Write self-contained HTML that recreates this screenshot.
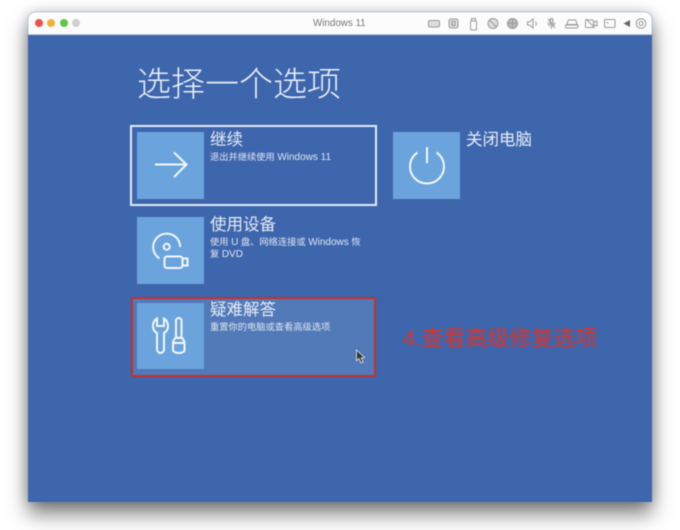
<!DOCTYPE html>
<html><head><meta charset="utf-8"><style>
html,body{margin:0;padding:0;width:680px;height:530px;overflow:hidden;background:#fff}
body{position:relative;font-family:"Liberation Sans","Noto Sans CJK SC",sans-serif}
.a{position:absolute;white-space:nowrap}
.a,svg{filter:blur(.4px)}
#win{left:27.5px;top:12px;width:624.5px;height:490px;background:#3e66ad;border-radius:7px 7px 0 0;box-shadow:0 12px 20px rgba(0,0,0,.5),0 0 14px rgba(0,0,0,.2);}
#bar{left:27.5px;top:12px;width:624.5px;height:23px;background:#fcfcfc;border-radius:7px 7px 0 0;border-bottom:1px solid #c9d1de;box-sizing:border-box}
.dot{width:8px;height:8px;border-radius:50%;top:19px}
.t{width:67px;height:67px;background:#6ba4dc}
.h{color:#e6edf6;font-size:16.5px;line-height:20px}
.s{color:#dfe7f3;font-size:9.25px;line-height:12px}
.s b{font-weight:400;font-size:10px}
svg{position:absolute;overflow:visible}
</style></head><body>
<div class="a" id="win"></div>
<div class="a" id="bar"></div>
<div class="a dot" style="left:35px;background:#e8534d"></div>
<div class="a dot" style="left:47px;background:#efb035"></div>
<div class="a dot" style="left:59.500px;background:#5fc545"></div>
<div class="a dot" style="left:71.500px;background:#cfcfcf"></div>
<div class="a" style="left:313px;top:17px;font-size:9.800px;line-height:13px;color:#777">Windows 11</div>

<svg style="left:0;top:0" width="680" height="36" fill="none" stroke="#999" stroke-width="1">
<rect x="428.500" y="20.500" width="11" height="6.500" rx="1.500" fill="#ddd"/>
<rect x="449" y="19" width="9" height="9" rx="2" fill="#ddd"/><rect x="452" y="21.500" width="3" height="4"/>
<rect x="470.500" y="21" width="6" height="9" rx="1"/><rect x="471.500" y="18.500" width="4" height="2.500"/>
<circle cx="493" cy="23.500" r="5" fill="#ddd"/><path d="M490 20.500l6 6"/>
<circle cx="512.500" cy="23.500" r="5" fill="#bbb"/><path d="M507.500 23.500h10M512.500 18.500v10"/>
<path d="M527.500 22h2l3.500-3v9l-3.500-3h-2z"/><path d="M535.500 21.500c1 1.500 1 3 0 4"/>
<rect x="550" y="18.500" width="3" height="6" rx="1.500" fill="#ddd"/><path d="M548 22.500c0 5 7 5 7 0M551.500 26.500v2.500M548 19l7 9"/>
<path d="M566.500 25l2-5h7l2 5z"/><rect x="565.500" y="24.500" width="12.500" height="3.500" rx="1.500"/>
<rect x="585.500" y="20" width="8" height="7.500" rx="1"/><path d="M593.500 22.500l3.500-1.500v5l-3.500-1.500M586 19l9 9"/>
<rect x="604.500" y="19.500" width="10.500" height="8" rx="1"/><path d="M606.500 22l2 1.500"/>
<path d="M630 20v7l-6.500-3.500z" fill="#666" stroke="none"/>
<circle cx="641" cy="23.500" r="4.800"/><circle cx="641" cy="23.500" r="2"/>
</svg>

<div class="a" style="left:137px;top:65px;font-size:34px;line-height:40px;color:#e9eff7;font-weight:300">选择一个选项</div>

<div class="a" style="left:130px;top:125px;width:247px;height:81px;border:2px solid #e3eaf5;box-sizing:border-box"></div>
<div class="a t" style="left:137px;top:132px"></div>
<svg style="left:137px;top:132px" width="67" height="67" fill="none" stroke="#f3f7fc" stroke-width="2"><path d="M18 32.500H49.500M37 20.500L49.500 32.500L37 45"/></svg>
<div class="a h" style="left:210px;top:130px">继续</div>
<div class="a s" style="left:210px;top:151px">退出并继续使用 <b>Windows 11</b></div>

<div class="a t" style="left:137px;top:217px"></div>
<svg style="left:137px;top:217px" width="67" height="67" fill="none" stroke="#f3f7fc" stroke-width="2"><path d="M22.500 41.500A13.500 13.500 0 1 1 43.200 30"/><circle cx="29.700" cy="29.700" r="3"/><rect x="27.500" y="39.500" width="18" height="11.500" rx="2.500"/><path d="M45.500 41.500H50.500V48.500H45.500"/></svg>
<div class="a h" style="left:210px;top:215px">使用设备</div>
<div class="a s" style="left:210px;top:236px">使用 <b>U</b> 盘、网络连接或 <b>Windows</b> 恢</div>
<div class="a s" style="left:210px;top:248px">复 <b>DVD</b></div>

<div class="a" style="left:131px;top:297px;width:245px;height:80px;background:#5279b8;border:2px solid #c8302c;border-radius:2px;box-sizing:border-box"></div>
<div class="a t" style="left:137px;top:303px;height:66px"></div>
<svg style="left:137px;top:303px" width="67" height="67" fill="none" stroke="#f3f7fc" stroke-width="2"><path d="M20 15.500C17.500 17 16 20 16 23C16 27 18 29 20 30V46.500a3.500 3.500 0 0 0 7 0V30C29 29 31 27 31 23C31 20 29.500 17 27 15.500V23h-7z"/><rect x="39" y="15" width="5.500" height="20" rx="2.700"/><path d="M38 35h7.500l2 4v8c0 4-11.500 4-11.500 0v-8zM36 40h11.500"/></svg>
<div class="a h" style="left:210px;top:300px">疑难解答</div>
<div class="a s" style="left:210px;top:321px">重置你的电脑或查看高级选项</div>
<svg style="left:355px;top:349px" width="11" height="16"><path d="M1.500 1L1.500 11.500 4 9.500 6 14 8 13 6.200 8.800 9.500 8.500z" fill="#333" stroke="#eee" stroke-width=".8"/></svg>

<div class="a t" style="left:393px;top:132px"></div>
<svg style="left:393px;top:132px" width="67" height="67" fill="none" stroke="#f3f7fc" stroke-width="2"><path d="M34 15V31M24.400 20.500A17 17 0 1 0 43.600 20.500"/></svg>
<div class="a h" style="left:466px;top:130px">关闭电脑</div>

<div class="a" style="left:403px;top:325px;font-size:22px;line-height:27px;color:#d8352a">4.查看高级修复选项</div>
</body></html>
